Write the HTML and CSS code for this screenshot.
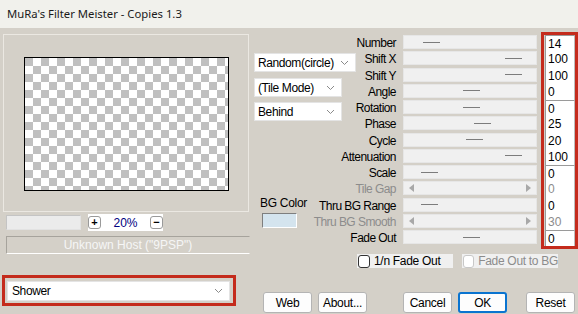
FILE: index.html
```html
<!DOCTYPE html>
<html lang="en">
<head>
<meta charset="UTF-8">
<title>MuRa's Filter Meister - Copies 1.3</title>
<link rel="stylesheet" href="styles.css">
</head>
<body>
  <div class="window">
    <div class="titlebar">MuRa's Filter Meister - Copies 1.3</div>
    <div class="main">

      <div class="left">
        <div class="preview-group">
          <div class="preview"></div>
        </div>
        <div class="zoom-row">
          <div class="zoom-blank"></div>
          <div class="zoom-ctl">
            <span class="zbtn">+</span>
            <span class="zval">20%</span>
            <span class="zbtn">&minus;</span>
          </div>
        </div>
        <div class="status">Unknown Host ("9PSP")</div>
        <div class="shower-box">
          <div class="combo combo-shower">
            <span>Shower</span>
            <svg width="9" height="6" viewBox="0 0 9 6"><path d="M1 1l3.5 3.5L8 1" fill="none" stroke="#8a8a8a" stroke-width="1"/></svg>
          </div>
        </div>
      </div>

      <div class="right">
        <div class="params">
          <div class="side">
            <div class="combo combo-random">
              <span>Random(circle)</span>
              <svg width="9" height="6" viewBox="0 0 9 6"><path d="M1 1l3.5 3.5L8 1" fill="none" stroke="#8a8a8a" stroke-width="1"/></svg>
            </div>
            <div class="combo combo-mode">
              <span>(Tile Mode)</span>
              <svg width="9" height="6" viewBox="0 0 9 6"><path d="M1 1l3.5 3.5L8 1" fill="none" stroke="#8a8a8a" stroke-width="1"/></svg>
            </div>
            <div class="combo combo-mode combo-behind">
              <span>Behind</span>
              <svg width="9" height="6" viewBox="0 0 9 6"><path d="M1 1l3.5 3.5L8 1" fill="none" stroke="#8a8a8a" stroke-width="1"/></svg>
            </div>
            <div class="bg-label">BG Color</div>
            <div class="bg-swatch"></div>
          </div>

          <div class="table">
            <div class="values">
              <div class="cell group">14</div>
              <div class="cell">100</div>
              <div class="cell">100</div>
              <div class="cell">0</div>
              <div class="cell group">0</div>
              <div class="cell">25</div>
              <div class="cell">20</div>
              <div class="cell">100</div>
              <div class="cell group">0</div>
              <div class="cell off">0</div>
              <div class="cell">0</div>
              <div class="cell off">30</div>
              <div class="cell group">0</div>
            </div>

            <div class="label">Number</div>
            <div class="slider"><i class="thumb" style="margin-left:19px"></i></div>
            <div class="label">Shift X</div>
            <div class="slider"><i class="thumb" style="margin-left:101px"></i></div>
            <div class="label">Shift Y</div>
            <div class="slider"><i class="thumb" style="margin-left:101px"></i></div>
            <div class="label">Angle</div>
            <div class="slider"><i class="thumb" style="margin-left:59px"></i></div>
            <div class="label">Rotation</div>
            <div class="slider"><i class="thumb" style="margin-left:59px"></i></div>
            <div class="label">Phase</div>
            <div class="slider"><i class="thumb" style="margin-left:70px"></i></div>
            <div class="label">Cycle</div>
            <div class="slider"><i class="thumb" style="margin-left:62px"></i></div>
            <div class="label">Attenuation</div>
            <div class="slider"><i class="thumb" style="margin-left:101px"></i></div>
            <div class="label">Scale</div>
            <div class="slider"><i class="thumb" style="margin-left:17px"></i></div>
            <div class="label off">Tile Gap</div>
            <div class="slider disabled"><i class="arrow-l"></i><i class="arrow-r"></i></div>
            <div class="label">Thru BG Range</div>
            <div class="slider"><i class="thumb" style="margin-left:17px"></i></div>
            <div class="label off">Thru BG Smooth</div>
            <div class="slider disabled"><i class="arrow-l"></i><i class="arrow-r"></i></div>
            <div class="label">Fade Out</div>
            <div class="slider"><i class="thumb" style="margin-left:59px"></i></div>
          </div>
        </div>

        <div class="checks">
          <label class="check"><span class="box"></span>1/n Fade Out</label>
          <label class="check off"><span class="box"></span>Fade Out to BG</label>
        </div>

        <div class="buttons">
          <button class="btn">Web</button>
          <button class="btn">About...</button>
          <button class="btn gap-big">Cancel</button>
          <button class="btn default">OK</button>
          <button class="btn gap-mid">Reset</button>
        </div>
      </div>

    </div>
  </div>
</body>
</html>
```

FILE: styles.css
```css
* {
  box-sizing: border-box;
}
body {
  margin: 0;
  font-family: "Liberation Sans", Arial, sans-serif;
  font-size: 11px;
  color: #000;
  background: #d4d0c8;
}
.window {
  width: 578px;
  height: 314px;
  overflow: hidden;
  background: #d4d0c8;
}
.titlebar {
  height: 28px;
  padding-left: 7px;
  line-height: 27px;
  font-family: "Noto Sans", sans-serif;
  font-size: 11.3px;
  background: #f1f1ec;
  color: #1a1a1a;
}
.main {
  display: flex;
}

/* left column */
.left {
  width: 250px;
  flex: none;
}
.preview-group {
  margin: 6px 0 0 3px;
  width: 246px;
  height: 178px;
  padding: 22px 0 0 20px;
  border: 1px solid #ebe8e2;
}
.preview {
  width: 205px;
  height: 134px;
  border: 1px solid #000;
  background-color: #fff;
  background-image:
    linear-gradient(45deg, #c0c0c0 25%, transparent 25%, transparent 75%, #c0c0c0 75%),
    linear-gradient(45deg, #c0c0c0 25%, transparent 25%, transparent 75%, #c0c0c0 75%);
  background-size: 16px 16px;
  background-position: 8px 0, 0 8px;
}
.zoom-row {
  display: flex;
  align-items: center;
  margin-top: 2px;
  height: 17px;
}
.zoom-blank {
  margin-left: 6px;
  width: 75px;
  height: 15px;
  background: #ebebeb;
  border: 1px solid #c4c4c4;
  border-right-color: #e2e2e2;
  border-bottom-color: #e2e2e2;
}
.zoom-ctl {
  margin-left: 7px;
  width: 75px;
  height: 17px;
  background: #fff;
  display: flex;
  align-items: center;
  justify-content: space-between;
}
.zbtn {
  width: 13px;
  height: 13px;
  border: 1px solid #9a9a9a;
  border-radius: 3px;
  display: flex;
  align-items: center;
  justify-content: center;
  font-weight: bold;
  font-size: 11px;
  line-height: 1;
}
.zval {
  color: #000080;
  font-size: 12px;
}
.status {
  margin: 5px 0 0 6px;
  width: 244px;
  height: 18px;
  line-height: 16px;
  text-align: center;
  font-size: 12px;
  color: #f6f6f6;
  border: 1px solid #a6a39c;
  border-right-color: #d4d0c8;
  border-bottom-color: #fff;
}
.shower-box {
  margin: 21px 0 0 2px;
  width: 234px;
  height: 31px;
  padding: 3px 3px 2px 2px;
  border: 3px solid #c42b1c;
}

/* combos */
.combo {
  display: flex;
  align-items: center;
  justify-content: space-between;
  background: #fff;
  border: 1px solid #e4e4e4;
  padding: 0 6px 0 3px;
  font-size: 12px;
  letter-spacing: -0.4px;
}
.combo-shower {
  height: 20px;
  padding-left: 4px;
}
.combo-random {
  margin-top: 18px;
  width: 102px;
  height: 19px;
}
.combo-mode {
  margin-top: 6px;
  width: 88px;
  height: 19px;
}
.combo-behind {
  margin-top: 5px;
}

/* right column */
.right {
  flex: 1;
  padding-left: 4px;
}
.params {
  display: flex;
  margin-top: 7px;
}
.side {
  width: 46px;
  flex: none;
}
.bg-label {
  margin: 75px 0 0 6px;
  white-space: nowrap;
  font-size: 12px;
  letter-spacing: -0.3px;
}
.bg-swatch {
  margin: 3px 0 0 8px;
  width: 35px;
  height: 15px;
  background: #d4e4ee;
  border: 1px solid #7e7e7e;
  border-right-color: #fff;
  border-bottom-color: #fff;
}
.table {
  display: grid;
  grid-template-columns: 96px 141px 41px;
  grid-template-rows: repeat(13, 16.25px);
}
.label {
  text-align: right;
  white-space: nowrap;
  line-height: 16px;
  font-size: 12px;
  letter-spacing: -0.55px;
}
.label.off {
  color: #8c8c8c;
}
.slider {
  margin-left: 7px;
  width: 134px;
  height: 14px;
  background: #f0f0f0;
  border: 1px solid #e6e6e6;
  display: flex;
  align-items: center;
}
.thumb {
  width: 17px;
  height: 1px;
  background: #7c7c7c;
}
.slider.disabled {
  justify-content: space-between;
  padding: 0 5px;
}
.arrow-l,
.arrow-r {
  width: 0;
  height: 0;
  border-top: 4px solid transparent;
  border-bottom: 4px solid transparent;
}
.arrow-l {
  border-right: 5px solid #a8a8a8;
}
.arrow-r {
  border-left: 5px solid #a8a8a8;
}
.values {
  grid-column: 3;
  grid-row: 1 / span 13;
  margin: -3px 0 -3px 4px;
  border: 3px solid #c42b1c;
  background: #d4d0c8;
  padding-left: 1px;
}
.cell {
  height: 16.25px;
  line-height: 16px;
  padding-left: 2px;
  font-size: 12px;
  background: #fff;
  border-left: 1px solid #9a9a9a;
  border-right: 1px solid #bdbdbd;
}
.cell.group {
  border-top: 1px solid #9a9a9a;
}
.cell.off {
  color: #8c8c8c;
}

/* checkboxes */
.checks {
  display: flex;
  gap: 9px;
  margin: 8px 0 0 103px;
}
.check {
  width: 96px;
  height: 14px;
  display: flex;
  align-items: center;
  gap: 4px;
  padding-left: 1px;
  background: #f0f0f0;
  font-size: 12px;
  letter-spacing: -0.3px;
  white-space: nowrap;
}
.check .box {
  width: 12px;
  height: 13px;
  border: 1px solid #333;
  border-radius: 3px;
  background: #fff;
}
.check.off {
  color: #8c8c8c;
}
.check.off .box {
  border-color: #c8c8c8;
}

/* buttons */
.buttons {
  display: flex;
  margin: 24px 0 0 9px;
}
.btn {
  width: 49px;
  height: 21px;
  margin-right: 6px;
  padding: 0;
  font-family: "Liberation Sans", Arial, sans-serif;
  font-size: 12px;
  letter-spacing: -0.3px;
  background: #fdfdfd;
  border: 1px solid #b4b4b4;
  border-radius: 3px;
  color: #000;
}
.btn.gap-big {
  margin-left: 30px;
}
.btn.gap-mid {
  margin-left: 13px;
}
.btn.default {
  border: 2px solid #0a74d0;
}
```
